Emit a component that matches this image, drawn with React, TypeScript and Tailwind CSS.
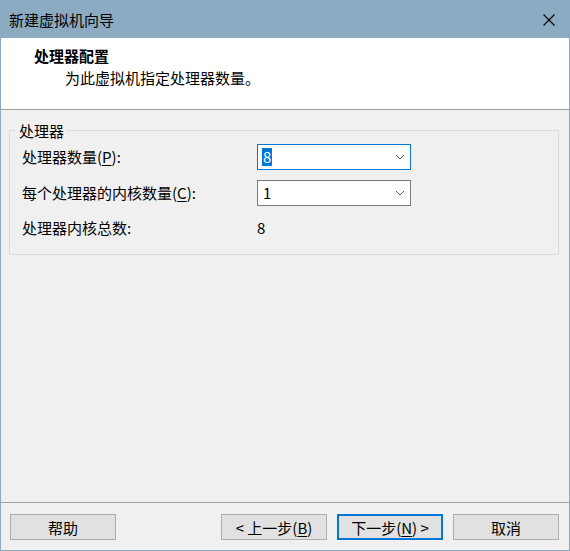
import React from "react";

const font = { fontFamily: '"Noto Sans CJK SC", "Noto Sans", sans-serif' };

function Chevron() {
  return (
    <svg width="10" height="6" viewBox="0 0 10 6" className="shrink-0">
      <path d="M1 1 L5 5 L9 1" fill="none" stroke="#606060" strokeWidth="1" />
    </svg>
  );
}

function Select({ value, focused }: { value: string; focused?: boolean }) {
  return (
    <div
      className={
        "w-[154px] h-[26px] bg-white flex items-center justify-between pl-[4px] pr-[5px] border " +
        (focused ? "border-[#0078d7]" : "border-[#7a7a7a]")
      }
    >
      {focused ? (
        <span className="bg-[#0078d7] text-white leading-[18px] px-[1px]">{value}</span>
      ) : (
        <span className="leading-[18px] pl-[1px]">{value}</span>
      )}
      <Chevron />
    </div>
  );
}

function Btn({ children, primary }: { children: React.ReactNode; primary?: boolean }) {
  return (
    <button
      className={
        "w-[106px] h-[26px] bg-[#e1e1e1] flex items-center justify-center leading-none " +
        (primary ? "border-2 border-[#0078d7]" : "border border-[#adadad]")
      }
    >
      {children}
    </button>
  );
}

export default function App() {
  return (
    <div
      style={font}
      className="w-[570px] h-[551px] border border-[#8babc3] bg-[#f0f0f0] flex flex-col text-[15px] text-black overflow-hidden"
    >
      <div className="h-[37px] shrink-0 bg-[#8babc3] flex items-center justify-between pl-[8px] pr-[14px]">
        <span className="leading-[20px]">新建虚拟机向导</span>
        <svg width="12" height="12" viewBox="0 0 12 12">
          <path d="M0.5 0.5 L11.5 11.5 M11.5 0.5 L0.5 11.5" stroke="#000" strokeWidth="1.1" />
        </svg>
      </div>

      <div className="h-[72px] shrink-0 bg-white border-b border-[#a0a0a0] pt-[8px]">
        <div className="pl-[33px] font-bold leading-[20px]">处理器配置</div>
        <div className="pl-[64px] mt-[2px] leading-[20px]">为此虚拟机指定处理器数量。</div>
      </div>

      <div className="flex-1 pt-[20px] pl-[8px]">
        <div className="relative w-[550px] h-[125px] border border-[#dcdcdc] pl-[12px] pt-[13px]">
          <span className="absolute left-[7px] -top-[10px] px-[2px] bg-[#f0f0f0] leading-[20px]">
            处理器
          </span>
          <div className="grid grid-cols-[235px_154px] gap-y-[10px] items-center">
            <span>
              处理器数量(<span className="underline underline-offset-2">P</span>):
            </span>
            <Select value="8" focused />
            <span>
              每个处理器的内核数量(<span className="underline underline-offset-2">C</span>):
            </span>
            <Select value="1" />
            <span className="leading-[24px]">处理器内核总数:</span>
            <span className="leading-[24px]">8</span>
          </div>
        </div>
      </div>

      <div className="h-[48px] shrink-0 border-t border-[#a0a0a0] pt-[11px] pl-[9px] pr-[10px] flex justify-between items-start">
        <Btn>帮助</Btn>
        <div className="flex gap-[10px]">
          <Btn>
            &lt; 上一步(<span className="underline underline-offset-2">B</span>)
          </Btn>
          <Btn primary>
            下一步(<span className="underline underline-offset-2">N</span>) &gt;
          </Btn>
          <Btn>取消</Btn>
        </div>
      </div>
    </div>
  );
}
